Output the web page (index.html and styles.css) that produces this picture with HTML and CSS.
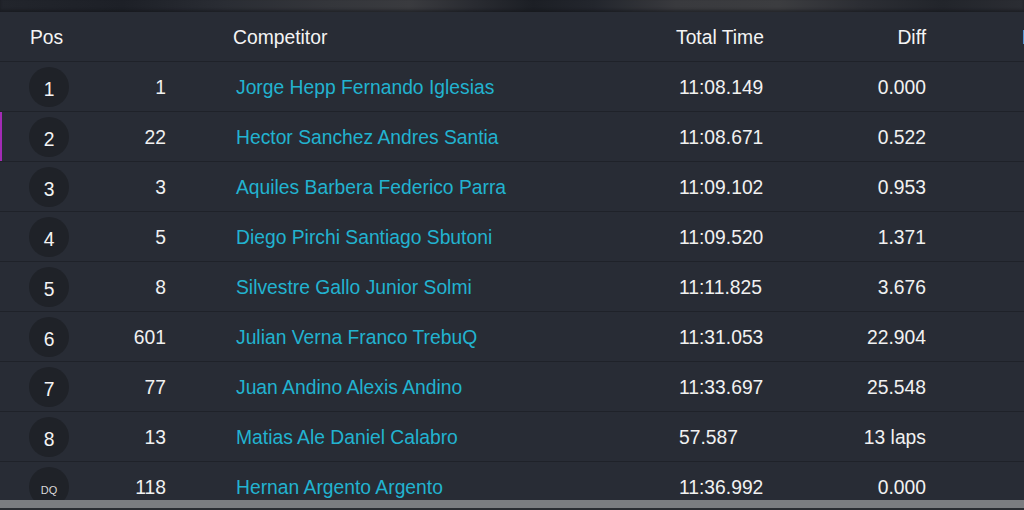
FILE: index.html
```html
<!DOCTYPE html>
<html>
<head>
<meta charset="utf-8">
<link rel="stylesheet" href="styles.css">
</head>
<body>
<div class="page">
  <div class="banner"></div>
  <div class="board">
    <div class="table">
      <div class="row head">
        <div class="c-pos">Pos</div>
        <div class="c-no"></div>
        <div class="c-name">Competitor</div>
        <div class="c-time">Total Time</div>
        <div class="c-diff">Diff</div>
        <div class="c-gap"></div>
        <div class="c-extra">Best Lap</div>
      </div>
      <div class="row">
        <div class="c-pos"><span class="badge">1</span></div>
        <div class="c-no">1</div>
        <div class="c-name"><a class="link">Jorge Hepp Fernando Iglesias</a></div>
        <div class="c-time">11:08.149</div>
        <div class="c-diff">0.000</div>
      </div>
      <div class="row marked">
        <div class="c-pos"><span class="badge">2</span></div>
        <div class="c-no">22</div>
        <div class="c-name"><a class="link">Hector Sanchez Andres Santia</a></div>
        <div class="c-time">11:08.671</div>
        <div class="c-diff">0.522</div>
      </div>
      <div class="row">
        <div class="c-pos"><span class="badge">3</span></div>
        <div class="c-no">3</div>
        <div class="c-name"><a class="link">Aquiles Barbera Federico Parra</a></div>
        <div class="c-time">11:09.102</div>
        <div class="c-diff">0.953</div>
      </div>
      <div class="row">
        <div class="c-pos"><span class="badge">4</span></div>
        <div class="c-no">5</div>
        <div class="c-name"><a class="link">Diego Pirchi Santiago Sbutoni</a></div>
        <div class="c-time">11:09.520</div>
        <div class="c-diff">1.371</div>
      </div>
      <div class="row">
        <div class="c-pos"><span class="badge">5</span></div>
        <div class="c-no">8</div>
        <div class="c-name"><a class="link">Silvestre Gallo Junior Solmi</a></div>
        <div class="c-time">11:11.825</div>
        <div class="c-diff">3.676</div>
      </div>
      <div class="row">
        <div class="c-pos"><span class="badge">6</span></div>
        <div class="c-no">601</div>
        <div class="c-name"><a class="link">Julian Verna Franco TrebuQ</a></div>
        <div class="c-time">11:31.053</div>
        <div class="c-diff">22.904</div>
      </div>
      <div class="row">
        <div class="c-pos"><span class="badge">7</span></div>
        <div class="c-no">77</div>
        <div class="c-name"><a class="link">Juan Andino Alexis Andino</a></div>
        <div class="c-time">11:33.697</div>
        <div class="c-diff">25.548</div>
      </div>
      <div class="row">
        <div class="c-pos"><span class="badge">8</span></div>
        <div class="c-no">13</div>
        <div class="c-name"><a class="link">Matias Ale Daniel Calabro</a></div>
        <div class="c-time">57.587</div>
        <div class="c-diff">13 laps</div>
      </div>
      <div class="row">
        <div class="c-pos"><span class="badge small">DQ</span></div>
        <div class="c-no">118</div>
        <div class="c-name"><a class="link">Hernan Argento Argento</a></div>
        <div class="c-time">11:36.992</div>
        <div class="c-diff">0.000</div>
      </div>
    </div>
  </div>
  <div class="scrollbar"></div>
</div>
</body>
</html>
```

FILE: styles.css
```css
html, body {
  margin: 0;
  padding: 0;
  background: #282c35;
}

.page {
  width: 1024px;
  height: 510px;
  overflow: hidden;
  display: flex;
  flex-direction: column;
  font-family: "Liberation Sans", Arial, sans-serif;
  color: #f1f1f1;
  background: #282c35;
}

.banner {
  height: 12px;
  flex: none;
  background:
    linear-gradient(90deg,
      #22252c 0%, #1d2027 12%, #2a2d34 22%, #34363b 32%, #3a3b3f 40%,
      #2a2c32 46%, #1c1f25 52%, #23262d 58%, #393a3e 66%, #3c3d40 76%,
      #2c2e34 84%, #22252b 92%, #2b2d33 100%);
  box-shadow: inset 0 -2px 3px rgba(20, 22, 27, 0.6);
}

.board {
  flex: 1;
  overflow: hidden;
}

.table {
  width: 1300px;
}

.row {
  display: grid;
  grid-template-columns: 120px 46px 510px 160px 90px 96px 200px;
  height: 47px;
  box-sizing: content-box;
  padding-top: 2px;
  align-items: center;
  border-bottom: 1px solid #1f2229;
  font-size: 19.3px;
  position: relative;
}

.row.head {
  color: #f4f4f4;
}

.row.marked {
  box-shadow: inset 2px 0 0 #a22bb5;
}

.c-pos {
  padding-left: 29px;
}

.head .c-pos {
  padding-left: 30px;
}

.c-no {
  text-align: right;
}

.c-name {
  padding-left: 67px;
}

.row:not(.head) .c-name {
  padding-left: 70px;
}

.row:not(.head) .c-time {
  padding-left: 3px;
}

.c-diff {
  text-align: right;
}

.c-extra {
  white-space: nowrap;
}

.badge {
  display: flex;
  width: 40px;
  height: 40px;
  margin-top: -2px;
  border-radius: 50%;
  background: #1f2228;
  box-sizing: border-box;
  padding-top: 7px;
  align-items: center;
  justify-content: center;
  font-size: 19.3px;
  color: #f4f4f4;
}

.badge.small {
  font-size: 11px;
  padding-top: 6px;
  color: #d8d8d8;
}

.link {
  color: #22b3d0;
  text-decoration: none;
}

.scrollbar {
  flex: none;
  height: 8px;
  background: #7b7d81;
  border-bottom: 2px solid #2a2d33;
}
```
